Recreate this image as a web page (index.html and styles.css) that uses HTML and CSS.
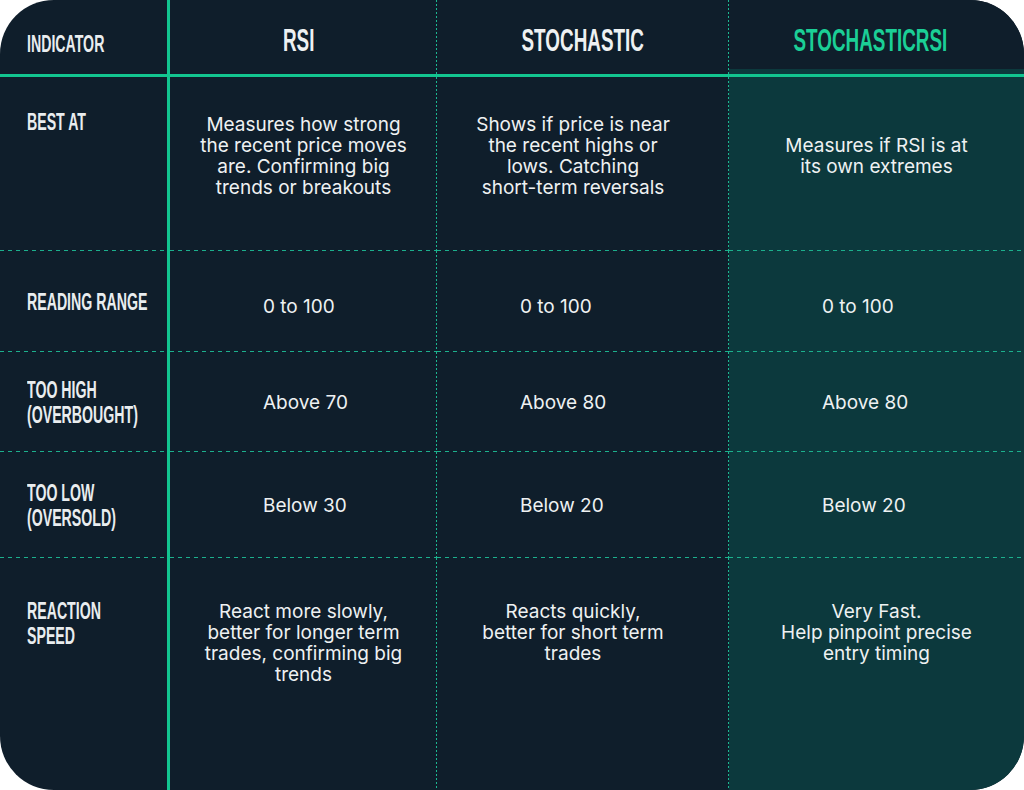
FILE: index.html
```html
<!DOCTYPE html>
<html lang="en">
<head>
<meta charset="utf-8">
<title>Indicator comparison</title>
<link rel="stylesheet" href="styles.css">
</head>
<body>
<div class="table">
  <div class="cell head c1"><span class="cond lbl">INDICATOR</span></div>
  <div class="cell head c2 mid"><span class="cond title">RSI</span></div>
  <div class="cell head c3 mid"><span class="cond title">STOCHASTIC</span></div>
  <div class="cell head c4 mid"><span class="cond title green">STOCHASTICRSI</span></div>

  <div class="cell r1 c1 rlabel"><span class="cond lbl">BEST AT</span></div>
  <div class="cell r1 c2 text">Measures how strong<br>the recent price moves<br>are. Confirming big<br>trends or breakouts</div>
  <div class="cell r1 c3 text">Shows if price is near<br>the recent highs or<br>lows. Catching<br>short-term reversals</div>
  <div class="cell r1 c4 text">Measures if RSI is at<br>its own extremes</div>

  <div class="cell r2 c1 rlabel"><span class="cond lbl">READING RANGE</span></div>
  <div class="cell r2 c2 val">0 to 100</div>
  <div class="cell r2 c3 val">0 to 100</div>
  <div class="cell r2 c4 val">0 to 100</div>

  <div class="cell r3 c1 rlabel"><span class="cond lbl">TOO HIGH<br>(OVERBOUGHT)</span></div>
  <div class="cell r3 c2 val">Above 70</div>
  <div class="cell r3 c3 val">Above 80</div>
  <div class="cell r3 c4 val">Above 80</div>

  <div class="cell r4 c1 rlabel"><span class="cond lbl">TOO LOW<br>(OVERSOLD)</span></div>
  <div class="cell r4 c2 val">Below 30</div>
  <div class="cell r4 c3 val">Below 20</div>
  <div class="cell r4 c4 val">Below 20</div>

  <div class="cell r5 c1 rlabel"><span class="cond lbl">REACTION<br>SPEED</span></div>
  <div class="cell r5 c2 text">React more slowly,<br>better for longer term<br>trades, confirming big<br>trends</div>
  <div class="cell r5 c3 text">Reacts quickly,<br>better for short term<br>trades</div>
  <div class="cell r5 c4 text">Very Fast.<br>Help pinpoint precise<br>entry timing</div>
</div>
</body>
</html>
```

FILE: styles.css
```css
* { box-sizing: border-box; }

html, body {
  margin: 0;
  padding: 0;
  background: #ffffff;
}

.table {
  display: grid;
  grid-template-columns: 170px 267px 292px 1fr;
  grid-template-rows: 77px 174px 101px 100px 106px 1fr;
  width: 1024px;
  height: 790px;
  border-radius: 54px;
  overflow: hidden;
  background: #0f1e2b;
  font-family: "Inter", "Liberation Sans", sans-serif;
  color: #eef1f2;
}

.cell {
  display: flex;
  min-width: 0;
  background-image: var(--v, none), var(--h, none);
  background-size: 1px 100%, 100% 1px;
  background-position: right top, left bottom;
  background-repeat: no-repeat;
}

/* columns */
.c1 { border-right: 3px solid #12c590; }
.c2, .c3 {
  --v: repeating-linear-gradient(to bottom, #1cb891 0 2px, transparent 2px 4px);
}
.c4 { background-color: #0c393d; }

/* body rows: dashed separators */
.r1, .r2, .r3, .r4 {
  --h: repeating-linear-gradient(to right, #1cb08d 0 4px, transparent 4px 8px);
}

/* header row */
.head {
  border-bottom: 3px solid #12c590;
  align-items: center;
}
.head.mid {
  justify-content: center;
  padding-top: 6px;
}
.head.c1 {
  padding-left: 27px;
  padding-top: 12px;
}
.head.c2 { padding-right: 10px; }
.head.c4 {
  padding-right: 12px;
  background-color: transparent;
  background-image: linear-gradient(to bottom, #0f1e2b 69px, #0c393d 69px);
  background-size: 100% 100%;
}

.cond {
  display: inline-block;
  font-family: "Liberation Sans", "Arial", sans-serif;
  font-weight: bold;
  transform: scaleX(0.59);
  white-space: nowrap;
}

.lbl {
  font-size: 24px;
  line-height: 25px;
  color: #e9edef;
  transform-origin: left center;
}

.title {
  font-size: 32px;
  line-height: 36px;
  color: #eef1f2;
  transform-origin: center center;
}
.title.green { color: #1bcf96; }

.rlabel {
  padding-left: 27px;
  align-items: center;
}
.r1.rlabel { align-items: flex-start; padding-top: 32px; }
.r5.rlabel { align-items: flex-start; padding-top: 40px; }

.text {
  font-size: 19px;
  line-height: 21px;
  text-align: center;
  justify-content: center;
}
.r1.text { align-items: center; padding-bottom: 16px; }
.r5.text { align-items: flex-start; padding-top: 43px; }
.c3.text { padding-right: 20px; }

.val {
  font-size: 19px;
  line-height: 21px;
  align-items: center;
}
.r2.val { padding-top: 10px; }
.c2.val { padding-left: 93px; }
.c3.val { padding-left: 83px; }
.c4.val { padding-left: 93px; }
```
